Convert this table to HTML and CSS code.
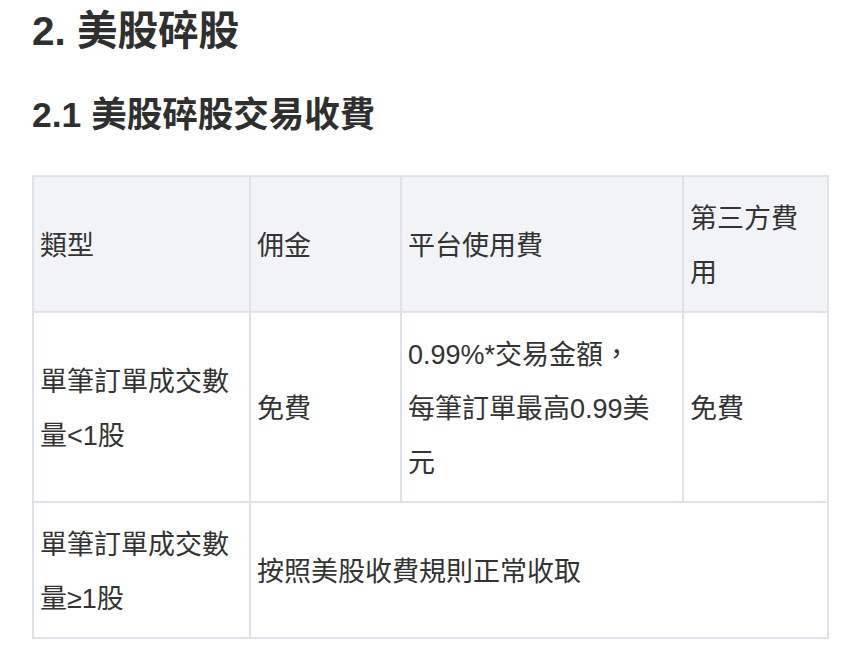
FILE: index.html
```html
<!DOCTYPE html>
<html lang="zh-Hant">
<head>
<meta charset="utf-8">
<title>美股碎股</title>
<link rel="stylesheet" href="styles.css">
</head>
<body>
<main class="page">
  <h1 class="title">2. 美股碎股</h1>
  <h2 class="subtitle">2.1 美股碎股交易收費</h2>
  <table class="fee-table">
    <colgroup>
      <col class="c1">
      <col class="c2">
      <col class="c3">
      <col class="c4">
    </colgroup>
    <thead>
      <tr>
        <th>類型</th>
        <th>佣金</th>
        <th>平台使用費</th>
        <th>第三方費用</th>
      </tr>
    </thead>
    <tbody>
      <tr>
        <td>單筆訂單成交數量&lt;1股</td>
        <td>免費</td>
        <td>0.99%*交易金額，<br>每筆訂單最高0.99美元</td>
        <td>免費</td>
      </tr>
      <tr>
        <td>單筆訂單成交數量≥1股</td>
        <td colspan="3">按照美股收費規則正常收取</td>
      </tr>
    </tbody>
  </table>
</main>
</body>
</html>
```

FILE: styles.css
```css
html, body {
  margin: 0;
  padding: 0;
  background: #ffffff;
}

body {
  font-family: "Liberation Sans", "Noto Sans CJK TC", sans-serif;
  color: #333333;
}

.page {
  padding: 0 30px 0 32px;
}

.title {
  margin: 0;
  font-size: 40.5px;
  line-height: 62px;
  font-weight: 700;
  color: #2f2f2f;
}

.subtitle {
  margin: 22px 0 0;
  font-size: 35.5px;
  line-height: 62px;
  font-weight: 700;
  color: #2f2f2f;
}

.fee-table {
  margin-top: 29px;
  width: 795px;
  table-layout: fixed;
  border-collapse: collapse;
  border: 2px solid #dfe2ec;
  font-size: 27px;
  line-height: 54px;
}

.c1 { width: 217px; }
.c2 { width: 151px; }
.c3 { width: 282px; }
.c4 { width: 145px; }

.fee-table th,
.fee-table td {
  border: 2px solid #dfe2ec;
  padding: 15px 12px 11px 6px;
  text-align: left;
  vertical-align: middle;
  font-weight: 400;
  color: #333333;
}

.fee-table thead th {
  background: #f2f3f7;
}
```
